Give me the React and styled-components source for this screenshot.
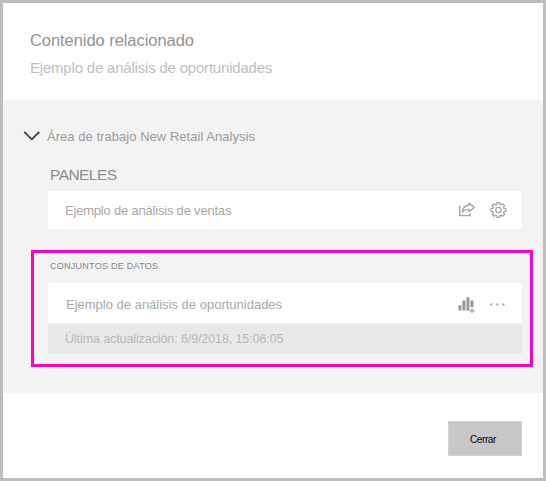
import React from "react";
import styled, { createGlobalStyle } from "styled-components";

const GlobalStyle = createGlobalStyle`
  * { box-sizing: border-box; }
  body { margin: 0; font-family: "Liberation Sans", Arial, sans-serif; }
`;

const Dialog = styled.main`
  width: 546px;
  height: 481px;
  border: 3px solid #bdbdbd;
  background: #fff;
  display: flex;
  flex-direction: column;
`;

const Header = styled.header`
  height: 97px;
  padding: 27px 27px 0;
`;

const Title = styled.h1`
  margin: 0;
  font-size: 16.5px;
  line-height: 20px;
  font-weight: 400;
  letter-spacing: -0.06px;
  color: #929292;
`;

const Subtitle = styled.p`
  margin: 8px 0 0;
  font-size: 15px;
  line-height: 20px;
  letter-spacing: -0.2px;
  color: #c0c0c0;
`;

const Content = styled.section`
  height: 293px;
  padding: 26px 10px 0 20px;
  background: #f3f3f3;
`;

const Workspace = styled.div`
  display: flex;
  align-items: center;
  gap: 7px;
  height: 20px;
  font-size: 13px;
  letter-spacing: 0.04px;
  color: #9b9b9b;
`;

const GroupTitle = styled.h2`
  margin: 19px 0 0 27px;
  font-size: 15.5px;
  line-height: 20px;
  font-weight: 400;
  letter-spacing: -0.55px;
  color: #8c8c8c;
`;

const Row = styled.div`
  display: flex;
  align-items: center;
  justify-content: space-between;
  height: ${(p) => p.$height}px;
  padding: 0 14px 0 ${(p) => p.$indent}px;
  background: #fff;
  font-size: 13px;
  letter-spacing: ${(p) => p.$tracking}px;
  color: #a8a8a8;
`;

const RowLabel = styled.span`
  padding-top: ${(p) => p.$drop || 0}px;
`;

const Panels = styled.div`
  margin: 6px 11px 0 25px;
`;

const Actions = styled.div`
  display: flex;
  align-items: center;
  gap: 14px;
  svg { display: block; }
`;

const Highlight = styled.section`
  width: 502px;
  height: 117px;
  margin: 21px 0 0 8px;
  border: 3px solid #ff00c0;
  padding: 5px 8px 0 14px;
`;

const DatasetTitle = styled.h3`
  margin: 0 0 0 2px;
  height: 25px;
  font-size: 9px;
  line-height: 16px;
  font-weight: 400;
  letter-spacing: 0.27px;
  color: #858585;
`;

const Updated = styled.p`
  margin: 1px 0 0;
  height: 30px;
  padding-left: 17px;
  background: #e9e9e9;
  font-size: 12.5px;
  line-height: 30px;
  letter-spacing: -0.1px;
  color: #b8b8b8;
`;

const Footer = styled.footer`
  flex: 1;
  display: flex;
  justify-content: flex-end;
  padding: 28px 21px 0;
`;

const CloseButton = styled.button`
  width: 74px;
  height: 35px;
  padding: 2px 4px 0 0;
  border: 1px solid #d0d0d0;
  border-radius: 0;
  background: #c8c8c8;
  color: #000;
  font: 10px/16px "Liberation Sans", Arial, sans-serif;
  letter-spacing: -0.4px;
`;

const Chevron = () => (
  <svg width="17" height="12" viewBox="0 0 17 12" fill="none" stroke="#3c3c3c" strokeWidth="1.8">
    <path d="M1.3 1.8 8.8 9.3 16.3 1.8" />
  </svg>
);

const ShareIcon = () => (
  <svg width="18" height="18" viewBox="0 0 18 18" fill="none" stroke="#a6a6a6" strokeWidth="1.4">
    <path d="M1.7 4.6v10h10.4v-2.7" />
    <path
      d="M4.3 11C4.7 6.8 7 4.5 11.1 4.3V2l5 4.4-5 4.4V8.4C7.9 8.3 5.9 9.1 4.3 11Z"
      strokeLinejoin="round"
    />
  </svg>
);

const gearPoints = Array.from({ length: 8 }, (_, tooth) =>
  [[-16, 5.8], [-11, 7.6], [11, 7.6], [16, 5.8]].map(([offset, radius]) => {
    const angle = ((tooth * 45 + offset) * Math.PI) / 180;
    return `${(8.4 + radius * Math.sin(angle)).toFixed(2)},${(9 - radius * Math.cos(angle)).toFixed(2)}`;
  })
).flat().join(" ");

const GearIcon = () => (
  <svg width="18" height="18" viewBox="0 0 18 18" fill="none" stroke="#a6a6a6" strokeWidth="1.3">
    <polygon points={gearPoints} strokeLinejoin="round" />
    <circle cx="8.4" cy="9" r="2.6" />
  </svg>
);

const ChartIcon = () => (
  <svg width="18" height="19" viewBox="0 0 18 19" fill="#999">
    <path d="M.4 11.2h3v5.2h-3zM4.4 6.4h3v10h-3zM8.4 3.2h3v13.2h-3zM12.4 6.4h3.1v6.5h-3.1z" />
    <path d="M13.4 14.2h1.2v2h2v1.2h-2v2h-1.2v-2h-2v-1.2h2z" />
  </svg>
);

const MoreIcon = () => (
  <svg width="18" height="18" viewBox="0 0 18 18" fill="#a0a0a0">
    <path d="M.3 9.5h2.1v2.1H.3zM6.3 9.5h2.1v2.1H6.3zM12.3 9.5h2.1v2.1h-2.1z" />
  </svg>
);

export default function App() {
  return (
    <>
      <GlobalStyle />
      <Dialog>
        <Header>
          <Title>Contenido relacionado</Title>
          <Subtitle>Ejemplo de análisis de oportunidades</Subtitle>
        </Header>
        <Content>
          <Workspace>
            <Chevron />
            <span>Área de trabajo New Retail Analysis</span>
          </Workspace>
          <GroupTitle>PANELES</GroupTitle>
          <Panels>
            <Row $height={38} $indent={17} $tracking={-0.2}>
              <RowLabel>Ejemplo de análisis de ventas</RowLabel>
              <Actions>
                <ShareIcon />
                <GearIcon />
              </Actions>
            </Row>
          </Panels>
          <Highlight>
            <DatasetTitle>CONJUNTOS DE DATOS</DatasetTitle>
            <Row $height={40} $indent={18} $tracking={0}>
              <RowLabel $drop={2}>Ejemplo de análisis de oportunidades</RowLabel>
              <Actions>
                <ChartIcon />
                <MoreIcon />
              </Actions>
            </Row>
            <Updated>Última actualización: 6/9/2018, 15:06:05</Updated>
          </Highlight>
        </Content>
        <Footer>
          <CloseButton>Cerrar</CloseButton>
        </Footer>
      </Dialog>
    </>
  );
}
